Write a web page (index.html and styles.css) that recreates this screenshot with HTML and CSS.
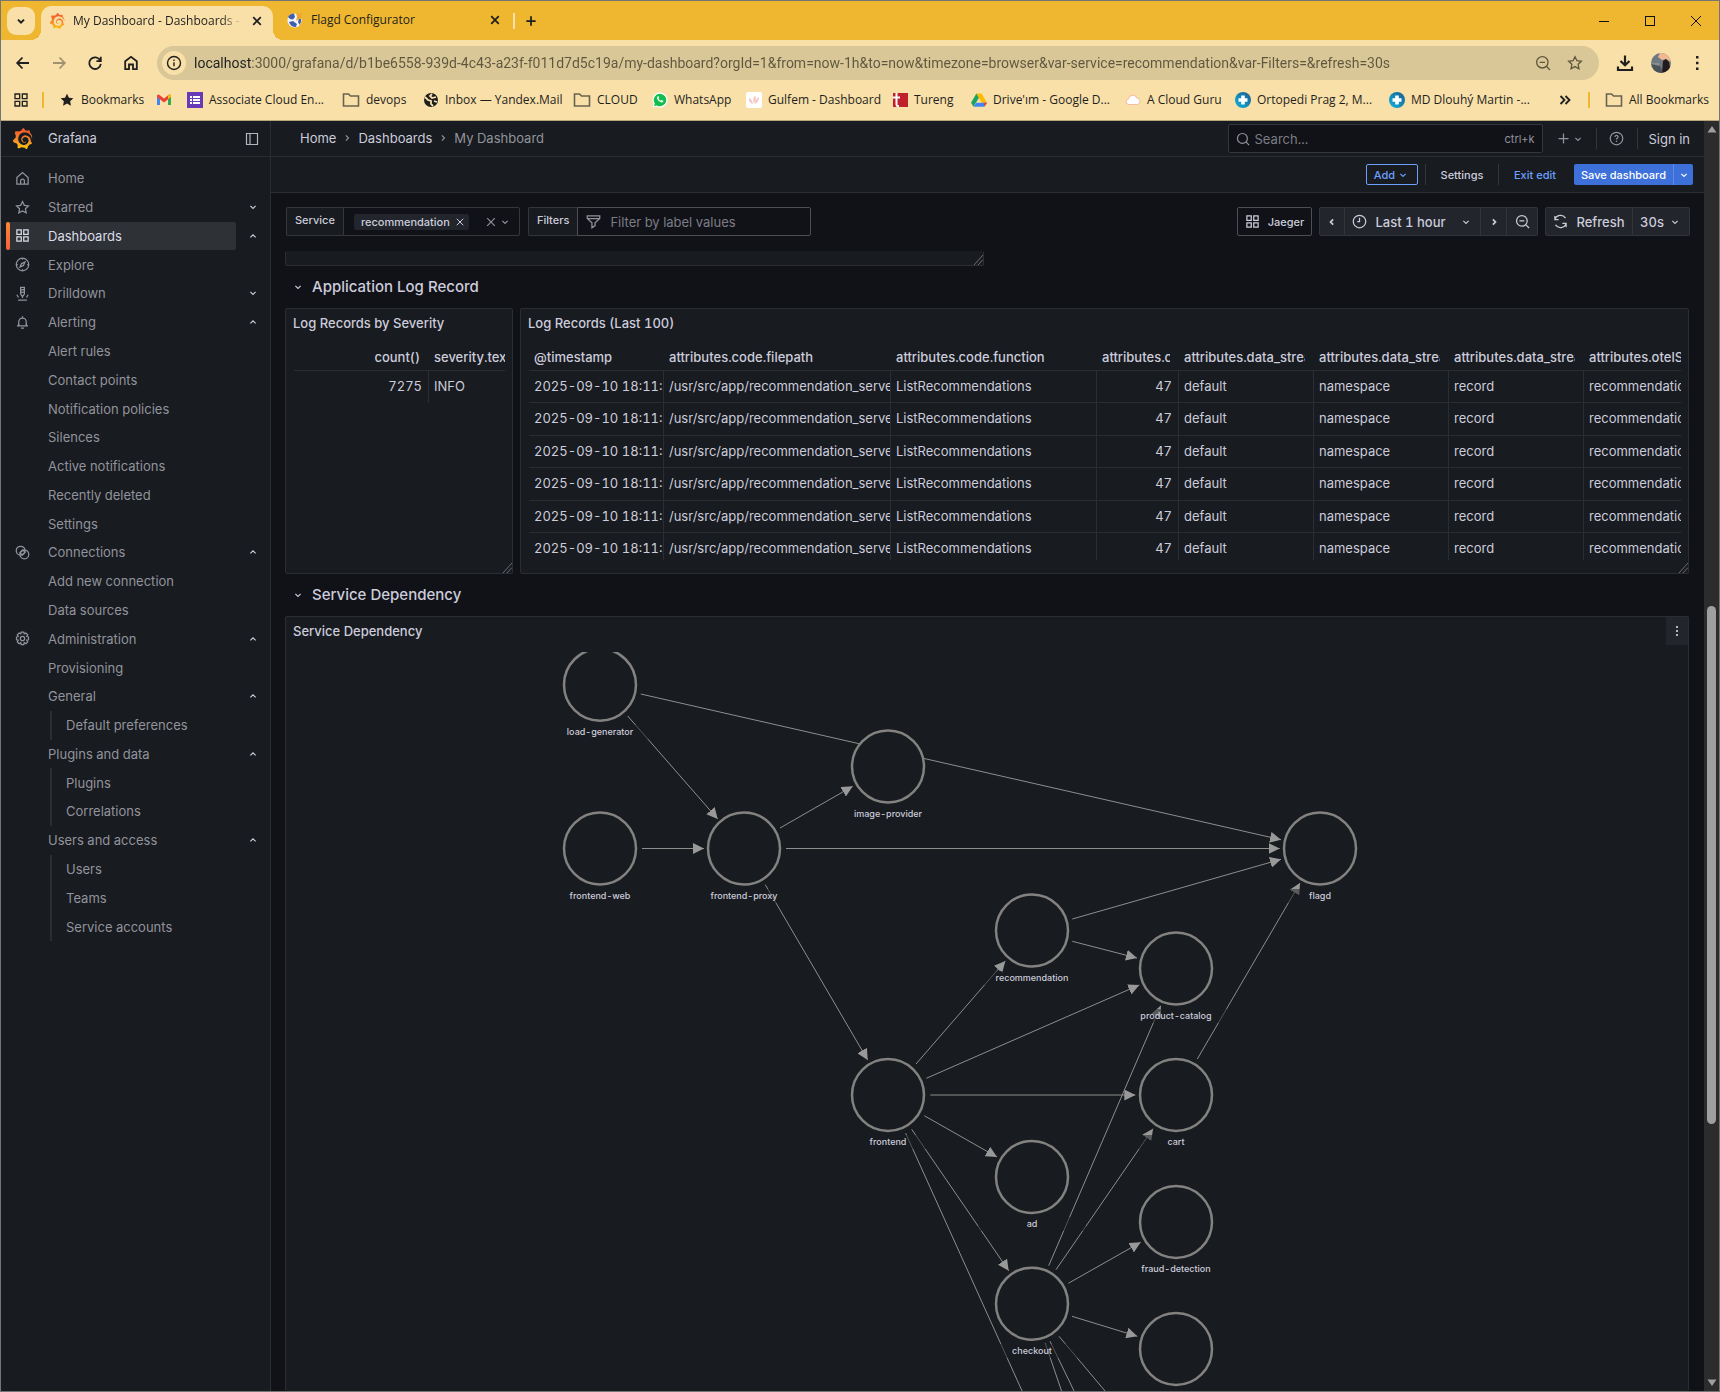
FILE: index.html
```html
<!DOCTYPE html>
<html lang="en">
<head>
<meta charset="utf-8">
<meta name="viewport" content="width=device-width, initial-scale=1">
<title>My Dashboard - Dashboards - Grafana</title>
<link rel="stylesheet" href="styles.css">
</head>
<body>
<svg class="sprite" aria-hidden="true">
  <defs>
    <linearGradient id="flame" x1="0" y1="1" x2="0" y2="0"><stop offset="0" stop-color="#fcc813"/><stop offset=".4" stop-color="#f7902a"/><stop offset="1" stop-color="#f0502a"/></linearGradient>
    <linearGradient id="teal" x1="1" y1="0" x2="0" y2="1"><stop offset="0" stop-color="#1c5a8c"/><stop offset="1" stop-color="#0fb5e0"/></linearGradient>
  </defs>
  <symbol id="grafana" viewBox="0 0 24 24"><path fill="url(#flame)" d="M23.02 10.59a8.578 8.578 0 0 0-.862-3.034 8.911 8.911 0 0 0-1.789-2.445c.337-1.342-.413-2.505-.413-2.505-1.292-.08-2.113.4-2.416.62-.052-.02-.102-.044-.154-.064-.22-.089-.446-.172-.677-.247-.231-.073-.47-.14-.711-.197a9.867 9.867 0 0 0-.875-.161C14.557.753 12.94 0 12.94 0c-1.804 1.145-2.147 2.744-2.147 2.744l-.018.093c-.098.029-.2.057-.298.088-.138.042-.275.094-.413.143-.138.055-.275.107-.41.166a8.869 8.869 0 0 0-1.557.87l-.063-.029c-2.497-.955-4.716.195-4.716.195-.203 2.658.996 4.33 1.235 4.636a11.608 11.608 0 0 0-.607 2.635C1.636 12.677.953 15.014.953 15.014c1.926 2.214 4.171 2.351 4.171 2.351.003-.002.006-.002.006-.005.285.509.615.994.986 1.446.156.19.32.371.488.548-.704 2.009.099 3.68.099 3.68 2.144.08 3.553-.937 3.849-1.173a9.784 9.784 0 0 0 3.164.501h.08l.055-.003.107-.002.103-.005.003.002c1.01 1.44 2.788 1.646 2.788 1.646 1.264-1.332 1.337-2.653 1.337-2.94v-.058c0-.02-.003-.039-.003-.06.265-.187.52-.387.758-.6a7.875 7.875 0 0 0 1.415-1.7c1.43.083 2.437-.885 2.437-.885-.236-1.49-1.085-2.216-1.264-2.354l-.018-.013-.016-.013a.217.217 0 0 1-.031-.02c.008-.092.016-.18.02-.27.011-.162.016-.323.016-.48v-.253l-.005-.098-.008-.135a1.891 1.891 0 0 0-.01-.13c-.003-.042-.008-.083-.013-.125l-.016-.124-.018-.122a6.215 6.215 0 0 0-2.032-3.73 6.015 6.015 0 0 0-3.222-1.46 6.292 6.292 0 0 0-.85-.048l-.107.002h-.063l-.044.003-.104.008a4.777 4.777 0 0 0-3.335 1.695c-.332.4-.592.84-.768 1.297a4.594 4.594 0 0 0-.312 1.817l.003.091c.005.055.007.11.013.164a3.615 3.615 0 0 0 .698 1.82 3.53 3.53 0 0 0 1.827 1.282c.33.098.66.14.971.137.039 0 .078 0 .114-.002l.063-.003c.02 0 .041-.003.062-.003.034-.002.065-.007.099-.01.007 0 .018-.003.028-.003l.031-.005.06-.008a1.18 1.18 0 0 0 .112-.02c.036-.008.072-.013.109-.024a2.634 2.634 0 0 0 .914-.415c.028-.02.056-.041.085-.065a.248.248 0 0 0 .039-.35.244.244 0 0 0-.309-.06l-.078.042c-.09.044-.184.083-.283.116a2.476 2.476 0 0 1-.475.096c-.028.003-.054.006-.083.006l-.083.002c-.026 0-.054 0-.08-.002l-.102-.006h-.012l-.024.006c-.016-.003-.031-.003-.044-.006-.031-.002-.06-.007-.091-.01a2.59 2.59 0 0 1-.724-.213 2.557 2.557 0 0 1-.667-.438 2.52 2.52 0 0 1-.805-1.475 2.306 2.306 0 0 1-.029-.444l.006-.122v-.023l.002-.031c.003-.021.003-.04.005-.06a3.163 3.163 0 0 1 1.352-2.29 3.12 3.12 0 0 1 .937-.43 2.946 2.946 0 0 1 .776-.101h.06l.07.002.045.003h.026l.07.005a4.041 4.041 0 0 1 1.635.49 3.94 3.94 0 0 1 1.602 1.662 3.77 3.77 0 0 1 .397 1.414l.005.076.003.075c.002.026.002.05.002.075 0 .024.003.052 0 .07v.065l-.002.073-.008.174a6.195 6.195 0 0 1-.08.639 5.1 5.1 0 0 1-.267.927 5.31 5.31 0 0 1-.624 1.13 5.052 5.052 0 0 1-3.237 2.014 4.82 4.82 0 0 1-.649.066l-.039.003h-.287a6.607 6.607 0 0 1-1.716-.265 6.776 6.776 0 0 1-3.4-2.274 6.75 6.75 0 0 1-.746-1.15 6.616 6.616 0 0 1-.714-2.596l-.005-.083-.002-.02v-.056l-.003-.073v-.096l-.003-.104v-.07l.003-.163c.008-.22.026-.45.054-.678a8.707 8.707 0 0 1 .28-1.355c.128-.444.286-.872.473-1.277a7.04 7.04 0 0 1 1.456-2.1 5.925 5.925 0 0 1 .953-.763c.169-.111.343-.213.524-.306.089-.05.182-.091.273-.135.047-.02.093-.042.138-.062a7.177 7.177 0 0 1 .714-.267l.145-.045c.049-.015.098-.026.148-.041.098-.029.197-.052.296-.076.049-.013.1-.02.15-.033l.15-.032.151-.028.076-.013.075-.01.153-.024c.057-.01.114-.013.171-.023l.169-.021c.036-.003.073-.008.106-.01l.073-.008.036-.003.042-.002c.057-.003.114-.008.171-.01l.086-.006h.023l.037-.003.145-.007a7.999 7.999 0 0 1 1.708.125 7.917 7.917 0 0 1 2.048.68 8.253 8.253 0 0 1 1.672 1.09l.09.077.089.078c.06.052.114.107.171.159.057.052.112.106.166.16.052.055.107.107.159.164a8.671 8.671 0 0 1 1.41 1.978c.012.026.028.052.04.078l.04.078.075.156c.023.051.05.1.07.153l.065.15a8.848 8.848 0 0 1 .45 1.34.19.19 0 0 0 .201.142.186.186 0 0 0 .172-.184c.01-.246.002-.532-.024-.856z"/></symbol>
  <symbol id="down" viewBox="0 0 24 24"><path d="M7.5 10l4.5 4.5 4.5-4.5"/></symbol>
  <symbol id="up" viewBox="0 0 24 24"><path d="M7.5 14.5L12 10l4.5 4.5"/></symbol>
  <symbol id="left" viewBox="0 0 24 24"><path d="M14 7.5L9.500 12l4.500 4.500"/></symbol>
  <symbol id="right" viewBox="0 0 24 24"><path d="M10 7.500l4.500 4.500-4.500 4.500"/></symbol>
  <symbol id="cross" viewBox="0 0 24 24"><path d="M5.500 5.500l13 13M18.500 5.500l-13 13"/></symbol>
  <symbol id="plus" viewBox="0 0 24 24"><path d="M12 4v16M4 12h16"/></symbol>
  <symbol id="home" viewBox="0 0 24 24"><path d="M3 10.500 12 2.500l9 8V21H3zM9 21v-5a3 3 0 0 1 6 0v5"/></symbol>
  <symbol id="star" viewBox="0 0 24 24"><path d="M12 2.500l2.900 6 6.600.9-4.800 4.600 1.200 6.600L12 17.400l-5.900 3.200L7.300 14 2.500 9.400l6.600-.9z"/></symbol>
  <symbol id="grid" viewBox="0 0 24 24"><path d="M3 3h7v7H3zM14 3h7v7h-7zM3 14h7v7H3zM14 14h7v7h-7z"/></symbol>
  <symbol id="compass" viewBox="0 0 24 24"><circle cx="12" cy="12" r="10"/><path d="M16 8l-2.500 5.500L8 16l2.500-5.500zM12 2v2.500M12 19.500V22M2 12h2.500M19.500 12H22"/></symbol>
  <symbol id="drill" viewBox="0 0 24 24"><path d="M9 2h6v11l-3 4-3-4zM9 6.500l6-1M9 10.500l6-1M12 17v2M5 22.500h14M5.500 18.500L3 14M18.500 18.500L21 14"/></symbol>
  <symbol id="bell" viewBox="0 0 24 24"><path d="M12 2v2.500M6 17v-6a6 6 0 0 1 12 0v6M3.500 17.500h17M9.500 21h5"/><path d="M4 17.500q2-.5 2-3M20 17.500q-2-.5-2-3"/></symbol>
  <symbol id="link" viewBox="0 0 24 24"><circle cx="9" cy="9" r="7"/><circle cx="15" cy="15" r="7"/><path d="M8 12.500l4.500-4.500 3.500 3.500-4.500 4.500z"/></symbol>
  <symbol id="gear" viewBox="0 0 24 24"><circle cx="12" cy="12" r="3.500"/><path d="M10 1.800h4l.8 2.800 2.600-1.400 2.900 2.900-1.500 2.500 2.800.8v4.600l-2.800.8 1.500 2.600-2.900 2.800-2.600-1.400-.8 2.800h-4l-.8-2.800-2.600 1.400-2.900-2.800 1.500-2.600-2.800-.8V9.400l2.800-.8-1.500-2.500 2.900-2.900 2.600 1.400z"/></symbol>
  <symbol id="search" viewBox="0 0 24 24"><circle cx="11" cy="11" r="8.500"/><path d="M17 17l5.500 5.500"/></symbol>
  <symbol id="zoomout" viewBox="0 0 24 24"><circle cx="11" cy="11" r="8.500"/><path d="M17 17l5.500 5.500M7 11h8"/></symbol>
  <symbol id="clock" viewBox="0 0 24 24"><circle cx="12" cy="12" r="10"/><path d="M12 6v6H8.500"/></symbol>
  <symbol id="sync" viewBox="0 0 24 24"><path d="M3 9a9.500 9.500 0 0 1 17-2.500M21 15a9.500 9.500 0 0 1-17 2.500M3 3v6h6M21 21v-6h-6"/></symbol>
  <symbol id="funnel" viewBox="0 0 24 24"><path d="M2 3h20v4l-7.500 7v4.500L9.500 22v-8L2 7zM2 7.500h20"/></symbol>
  <symbol id="folder" viewBox="0 0 18 16"><path d="M1.500 2h5l2 2h8v10h-15z"/></symbol>
  <symbol id="cross-disc" viewBox="0 0 16 16"><circle cx="8" cy="8" r="8" fill="url(#teal)"/><path d="M6.200 3.500h3.600v2.700h2.700v3.600H9.800v2.700H6.200V9.800H3.500V6.200h2.700z" fill="#fff"/></symbol>
</svg>

<header class="browser">
  <div class="tabstrip">
    <button class="tab-search" aria-label="Search tabs"><svg class="ico s16 bold"><use href="#down"/></svg></button>
    <div class="tab tab-active">
      <svg class="s16"><use href="#grafana"/></svg>
      <span class="tab-title fade">My Dashboard - Dashboards - Grafana</span>
      <button class="plain" aria-label="Close tab"><svg class="ico s14 bold"><use href="#cross"/></svg></button>
    </div>
    <div class="tab">
      <svg class="s16" viewBox="0 0 16 16"><circle cx="7.500" cy="8.500" r="7" fill="#f4f7fc"/><path d="M1 5a7 7 0 0 1 6-3.500L8 5 6 7.500 3 7zM2 10l4-1 4 3-1 3a7 7 0 0 1-7-5zM12 6l2 1a7 7 0 0 1-1.500 6L11 10z" fill="#3f5fae"/><path d="M9 1l3 1 3-1-1 3 1 2-3 1-3 2 1-4z" fill="#f0a330"/></svg>
      <span class="tab-title">Flagd Configurator</span>
      <button class="plain" aria-label="Close tab"><svg class="ico s14 bold"><use href="#cross"/></svg></button>
    </div>
    <span class="tab-rule"></span>
    <button class="plain new-tab" aria-label="New tab"><svg class="ico s14 bold"><use href="#plus"/></svg></button>
    <div class="window-controls">
      <button class="plain" aria-label="Minimize"><svg class="s12" viewBox="0 0 12 12"><path d="M1 6.500h10" stroke="#111"/></svg></button>
      <button class="plain" aria-label="Maximize"><svg class="s12" viewBox="0 0 12 12"><rect x="1.500" y="1.500" width="9" height="9" fill="none" stroke="#111"/></svg></button>
      <button class="plain" aria-label="Close"><svg class="s12" viewBox="0 0 12 12"><path d="M1 1l10 10M11 1L1 11" stroke="#111"/></svg></button>
    </div>
  </div>

  <div class="navbar">
    <div class="nav-buttons">
      <button class="plain" aria-label="Back"><svg class="s16" viewBox="0 0 16 16"><path d="M14 8H2.500M7.500 2.500L2.200 8l5.300 5.500" class="ink"/></svg></button>
      <button class="plain dim" aria-label="Forward"><svg class="s16" viewBox="0 0 16 16"><path d="M2 8h11.500M8.500 2.500L13.800 8l-5.300 5.500" class="ink"/></svg></button>
      <button class="plain" aria-label="Reload"><svg class="s16" viewBox="0 0 16 16"><path d="M13.200 5.500A5.800 5.800 0 1 0 13.800 8.800M13.800 1.800v4.400H9.400" class="ink"/></svg></button>
      <button class="plain" aria-label="Home page"><svg class="s16" viewBox="0 0 16 16"><path d="M2.200 14.200V6.200L8 1.800l5.800 4.400v8H10V9.500H6v4.700z" class="ink"/></svg></button>
    </div>
    <div class="omnibox">
      <button class="site-info" aria-label="View site information"><svg class="s16" viewBox="0 0 16 16"><circle cx="8" cy="8" r="6.500" class="ink thin"/><path d="M8 7.200v4M8 4.500v1.400" class="ink thin"/></svg></button>
      <input class="url" aria-label="Address" value="localhost:3000/grafana/d/b1be6558-939d-4c43-a23f-f011d7d5c19a/my-dashboard?orgId=1&amp;from=now-1h&amp;to=now&amp;timezone=browser&amp;var-service=recommendation&amp;var-Filters=&amp;refresh=30s">
      <button class="plain muted-ink" aria-label="Zoom"><svg class="ico s16"><use href="#zoomout"/></svg></button>
      <button class="plain muted-ink" aria-label="Bookmark this tab"><svg class="ico s16"><use href="#star"/></svg></button>
    </div>
    <div class="nav-tail">
      <button class="plain" aria-label="Downloads"><svg class="s18" viewBox="0 0 18 18"><path d="M9 1.500v9.500M4.500 7L9 11.200 13.500 7M2 12.500V16h14v-3.500" class="ink heavy"/></svg></button>
      <button class="plain" aria-label="Profile"><svg class="s20" viewBox="0 0 20 20"><clipPath id="disc"><circle cx="10" cy="10" r="10"/></clipPath><g clip-path="url(#disc)"><path d="M0 0h20v20H0z" fill="#6f7a80"/><path d="M9 0h11v9l-5-3-4 1-4-3z" fill="#f2b691"/><path d="M0 10h8l2 10H0z" fill="#8b8d92"/><path d="M11 20l1-12 3-2 3 3 2 11z" fill="#221a1c"/><path d="M0 11l9 2 3 7H4z" fill="#4b5258"/></g></svg></button>
      <button class="plain" aria-label="Chrome menu"><svg class="s16" viewBox="0 0 16 16"><path d="M7 1h2.500v2.500H7zM7 6.700h2.500v2.500H7zM7 12.400h2.500v2.500H7z" fill="#1f1f1f"/></svg></button>
    </div>
  </div>

  <nav class="bookmarks" aria-label="Bookmarks">
    <a href="#" aria-label="Apps"><svg class="ico s16"><use href="#grid"/></svg></a>
    <span class="bm-rule"></span>
    <a href="#"><svg class="s16 solid"><use href="#star"/></svg>Bookmarks</a>
    <a href="#" aria-label="Gmail"><svg class="s16" viewBox="0 0 16 16"><path d="M1 3.500V13h3V7z" fill="#4285f4"/><path d="M15 3.500V13h-3V7z" fill="#34a853"/><path d="M1 5l7 5.500L15 5V3.500Q14 2 12.500 3L8 6.500 3.500 3Q2 2 1 3.500z" fill="#ea4335"/><path d="M12 3.400V7.200L15 5V3.500Q14 2 12 3.400z" fill="#fbbc04"/></svg></a>
    <a href="#"><svg class="s16" viewBox="0 0 16 16"><path d="M0 0h16v16H0z" fill="#673ab7"/><path d="M3 4h2v2H3zM6 4h7v2H6zM3 7h2v2H3zM6 7h7v2H6zM3 10h2v2H3zM6 10h7v2H6z" fill="#fff"/></svg>Associate Cloud En...</a>
    <a href="#"><svg class="folder"><use href="#folder"/></svg>devops</a>
    <a href="#"><svg class="s16" viewBox="0 0 16 16"><circle cx="8" cy="8" r="7" fill="#1f1f1f"/><path d="M2 5l3 3 3 1v3l2 2M9 2L7 4l2 2 4-1M11 9l3 1" stroke="#f8e0a8" stroke-width="1.800" fill="none"/></svg>Inbox — Yandex.Mail</a>
    <a href="#"><svg class="folder"><use href="#folder"/></svg>CLOUD</a>
    <a href="#"><svg class="s16" viewBox="0 0 16 16"><path d="M8 .5a7.500 7.500 0 1 1-3.600 14L.5 15.500l1-3.900A7.500 7.500 0 0 1 8 .5z" fill="#fff"/><path d="M8 1.700a6.300 6.300 0 1 1-3.300 11.700L2 14.100l.8-2.700A6.300 6.300 0 0 1 8 1.700z" fill="#12bf4c"/><path d="M5.500 4.500q-1.500 1.500 1 4.200 2.800 2.600 4.600 1.300l.2-1.300-1.800-.8-.8.9q-1.400-.6-2.100-2l.7-.8-.7-1.700z" fill="#fff"/></svg>WhatsApp</a>
    <a href="#"><svg class="s16" viewBox="0 0 16 16"><rect width="16" height="16" rx="2" fill="#fff"/><path d="M7 12Q2 10 3 6q3 1 4 6zM8 12Q6 6 9 3.500q2 3-1 8.500zM9 12q0-5 4-7 0 5-4 7z" fill="#f5c6c4"/></svg>Gulfem - Dashboard</a>
    <a href="#"><svg class="s16" viewBox="0 0 16 16"><path d="M1 1h15v14H1z" fill="#c0202c"/><path d="M4.500 1v11.500q0 2 2.500 1.500M1 5.500h7" stroke="#fff" stroke-width="2" fill="none"/></svg>Tureng</a>
    <a href="#"><svg class="s16" viewBox="0 0 16 16"><path d="M5.400 1.500L0 10.700l2.600 4 5.500-9.200z" fill="#1ea362"/><path d="M5.400 1.500h5.200L16 10.700h-5.300z" fill="#ffba00"/><path d="M5.300 10.700H16l-2.700 4H2.600z" fill="#4285f4"/><path d="M12.500 10.700H16l-2.300 3.700z" fill="#ea4335"/></svg>Drive'ım - Google D...</a>
    <a href="#"><svg class="s16" viewBox="0 0 16 16"><path d="M3.500 12.500a2.800 2.800 0 0 1 0-5.500A4.300 4.300 0 0 1 11.800 6a3.300 3.300 0 0 1 .7 6.500z" fill="#fff" stroke="#f7b9a0"/></svg>A Cloud Guru</a>
    <a href="#"><svg class="s16"><use href="#cross-disc"/></svg>Ortopedi Prag 2, M...</a>
    <a href="#"><svg class="s16"><use href="#cross-disc"/></svg>MD Dlouhý Martin -...</a>
    <a href="#" aria-label="More bookmarks"><svg class="s14" viewBox="0 0 14 14"><path d="M2.500 3l4 4-4 4M7.500 3l4 4-4 4" class="ink"/></svg></a>
    <span class="bm-rule"></span>
    <a href="#"><svg class="folder"><use href="#folder"/></svg>All Bookmarks</a>
  </nav>
</header>

<div class="app">
  <aside class="sidebar">
    <div class="brand">
      <svg class="logo"><use href="#grafana"/></svg>
      <span>Grafana</span>
      <button class="plain" aria-label="Undock menu"><svg class="s14" viewBox="0 0 14 14"><path d="M1.500 1.500h11v11h-11zM5 1.500v11" fill="none" stroke="#b4b5bd" stroke-width="1.200"/></svg></button>
    </div>
    <ul class="menu">
      <li><a href="#"><svg class="ico s15"><use href="#home"/></svg>Home</a></li>
      <li><a href="#"><svg class="ico s15"><use href="#star"/></svg>Starred</a><button class="plain" aria-label="Expand Starred"><svg class="ico s14"><use href="#down"/></svg></button></li>
      <li class="current"><a href="#"><svg class="ico s15"><use href="#grid"/></svg>Dashboards</a><button class="plain" aria-label="Collapse Dashboards"><svg class="ico s14"><use href="#up"/></svg></button></li>
      <li><a href="#"><svg class="ico s15"><use href="#compass"/></svg>Explore</a></li>
      <li><a href="#"><svg class="ico s15"><use href="#drill"/></svg>Drilldown</a><button class="plain" aria-label="Expand Drilldown"><svg class="ico s14"><use href="#down"/></svg></button></li>
      <li><a href="#"><svg class="ico s15"><use href="#bell"/></svg>Alerting</a><button class="plain" aria-label="Collapse Alerting"><svg class="ico s14"><use href="#up"/></svg></button></li>
      <li class="sub"><a href="#">Alert rules</a></li>
      <li class="sub"><a href="#">Contact points</a></li>
      <li class="sub"><a href="#">Notification policies</a></li>
      <li class="sub"><a href="#">Silences</a></li>
      <li class="sub"><a href="#">Active notifications</a></li>
      <li class="sub"><a href="#">Recently deleted</a></li>
      <li class="sub"><a href="#">Settings</a></li>
      <li><a href="#"><svg class="ico s15"><use href="#link"/></svg>Connections</a><button class="plain" aria-label="Collapse Connections"><svg class="ico s14"><use href="#up"/></svg></button></li>
      <li class="sub"><a href="#">Add new connection</a></li>
      <li class="sub"><a href="#">Data sources</a></li>
      <li><a href="#"><svg class="ico s15"><use href="#gear"/></svg>Administration</a><button class="plain" aria-label="Collapse Administration"><svg class="ico s14"><use href="#up"/></svg></button></li>
      <li class="sub"><a href="#">Provisioning</a></li>
      <li class="sub"><a href="#">General</a><button class="plain" aria-label="Collapse General"><svg class="ico s14"><use href="#up"/></svg></button></li>
      <li class="leaf"><a href="#">Default preferences</a></li>
      <li class="sub"><a href="#">Plugins and data</a><button class="plain" aria-label="Collapse Plugins and data"><svg class="ico s14"><use href="#up"/></svg></button></li>
      <li class="leaf"><a href="#">Plugins</a></li>
      <li class="leaf"><a href="#">Correlations</a></li>
      <li class="sub"><a href="#">Users and access</a><button class="plain" aria-label="Collapse Users and access"><svg class="ico s14"><use href="#up"/></svg></button></li>
      <li class="leaf"><a href="#">Users</a></li>
      <li class="leaf"><a href="#">Teams</a></li>
      <li class="leaf"><a href="#">Service accounts</a></li>
    </ul>
  </aside>

  <main class="main">
    <div class="topbar">
      <nav class="crumbs" aria-label="Breadcrumbs">
        <a href="#">Home</a><svg class="ico s14"><use href="#right"/></svg><a href="#">Dashboards</a><svg class="ico s14"><use href="#right"/></svg><span>My Dashboard</span>
      </nav>
      <label class="search"><svg class="ico s14"><use href="#search"/></svg><input type="search" placeholder="Search..." aria-label="Search"><kbd>ctrl+k</kbd></label>
      <button class="plain add-menu" aria-label="New"><svg class="ico s15"><use href="#plus"/></svg><svg class="ico s14"><use href="#down"/></svg></button>
      <span class="rule"></span>
      <button class="plain help" aria-label="Help"><svg class="ico s15" viewBox="0 0 24 24"><circle cx="12" cy="12" r="10"/><path d="M9.500 9.500a2.500 2.500 0 1 1 3.500 2.300q-1 .5-1 1.700M12 15.500v2"/></svg></button>
      <span class="rule"></span>
      <a class="signin" href="#">Sign in</a>
    </div>

    <div class="actions">
      <button class="btn-add">Add<svg class="ico s14"><use href="#down"/></svg></button>
      <span class="rule"></span>
      <button class="plain settings">Settings</button>
      <span class="rule"></span>
      <button class="plain exit">Exit edit</button>
      <div class="save">
        <button>Save dashboard</button><button aria-label="More save options"><svg class="ico s14"><use href="#down"/></svg></button>
      </div>
    </div>

    <div class="controls">
      <div class="field">
        <label class="field-label" for="service">Service</label>
        <div class="picker">
          <span class="chip">recommendation<button class="plain" aria-label="Remove recommendation"><svg class="ico s12"><use href="#cross"/></svg></button></span>
          <input id="service" role="combobox" aria-expanded="false">
          <button class="plain" aria-label="Clear"><svg class="ico s14"><use href="#cross"/></svg></button>
          <button class="plain" aria-label="Open list"><svg class="ico s14"><use href="#down"/></svg></button>
        </div>
      </div>
      <div class="field">
        <label class="field-label" for="filters">Filters</label>
        <div class="filter-box"><svg class="ico s15"><use href="#funnel"/></svg><input id="filters" placeholder="Filter by label values"></div>
      </div>
      <div class="time-tools">
        <button class="btn-link"><svg class="ico s15"><use href="#grid"/></svg>Jaeger</button>
        <div class="group">
          <button class="step" aria-label="Move time range backwards"><svg class="ico s14 bold"><use href="#left"/></svg></button>
          <button class="range"><svg class="ico s15"><use href="#clock"/></svg>Last 1 hour<svg class="ico s14"><use href="#down"/></svg></button>
          <button class="step" aria-label="Move time range forwards"><svg class="ico s14 bold"><use href="#right"/></svg></button>
          <button class="zoom" aria-label="Zoom out time range"><svg class="ico s15"><use href="#zoomout"/></svg></button>
        </div>
        <div class="group">
          <button class="refresh"><svg class="ico s15"><use href="#sync"/></svg>Refresh</button>
          <button class="interval">30s<svg class="ico s14"><use href="#down"/></svg></button>
        </div>
      </div>
    </div>

    <div class="board">
      <section class="panel panel-tail"><svg class="grip" viewBox="0 0 10 10"><path d="M1 10L10 0M5 10l5-5.500"/></svg></section>
      <h2 class="row-title"><svg class="ico s14"><use href="#down"/></svg>Application Log Record</h2>
      <div class="log-row">
        <section class="panel">
          <h3>Log Records by Severity</h3>
          <div class="table-view">
            <table class="severity">
              <colgroup><col class="w-m"><col class="w-s"></colgroup>
              <thead><tr><th class="num"><div>count()</div></th><th class="edge"><div>severity.text</div></th></tr></thead>
              <tbody><tr><td class="num">7275</td><td>INFO</td></tr></tbody>
            </table>
          </div>
          <svg class="grip" viewBox="0 0 10 10"><path d="M1 10L10 0M5 10l5-5.500"/></svg>
        </section>
        <section class="panel">
          <h3>Log Records (Last 100)</h3>
          <div class="table-view">
            <table class="records">
              <colgroup><col class="w-m"><col class="w-xl"><col class="w-l"><col class="w-s"><col class="w-m"><col class="w-m"><col class="w-m"><col class="w-m"></colgroup>
              <thead><tr><th><div>@timestamp</div></th><th><div>attributes.code.filepath</div></th><th><div>attributes.code.function</div></th><th><div>attributes.c</div></th><th><div>attributes.data_strea</div></th><th><div>attributes.data_strea</div></th><th><div>attributes.data_strea</div></th><th><div>attributes.otelS</div></th></tr></thead>
              <tbody>
                <tr><td>2025-09-10 18:11:2</td><td>/usr/src/app/recommendation_server</td><td>ListRecommendations</td><td class="num">47</td><td>default</td><td>namespace</td><td>record</td><td>recommendation</td></tr>
                <tr><td>2025-09-10 18:11:2</td><td>/usr/src/app/recommendation_server</td><td>ListRecommendations</td><td class="num">47</td><td>default</td><td>namespace</td><td>record</td><td>recommendation</td></tr>
                <tr><td>2025-09-10 18:11:2</td><td>/usr/src/app/recommendation_server</td><td>ListRecommendations</td><td class="num">47</td><td>default</td><td>namespace</td><td>record</td><td>recommendation</td></tr>
                <tr><td>2025-09-10 18:11:2</td><td>/usr/src/app/recommendation_server</td><td>ListRecommendations</td><td class="num">47</td><td>default</td><td>namespace</td><td>record</td><td>recommendation</td></tr>
                <tr><td>2025-09-10 18:11:2</td><td>/usr/src/app/recommendation_server</td><td>ListRecommendations</td><td class="num">47</td><td>default</td><td>namespace</td><td>record</td><td>recommendation</td></tr>
                <tr><td>2025-09-10 18:11:2</td><td>/usr/src/app/recommendation_server</td><td>ListRecommendations</td><td class="num">47</td><td>default</td><td>namespace</td><td>record</td><td>recommendation</td></tr>
              </tbody>
            </table>
          </div>
          <svg class="grip" viewBox="0 0 10 10"><path d="M1 10L10 0M5 10l5-5.500"/></svg>
        </section>
      </div>
      <h2 class="row-title"><svg class="ico s14"><use href="#down"/></svg>Service Dependency</h2>
      <section class="panel panel-graph">
        <div class="panel-head">
          <h3>Service Dependency</h3>
          <button class="panel-menu" aria-label="Panel menu"><svg class="s14" viewBox="0 0 14 14"><path d="M6 2h2v2H6zM6 6h2v2H6zM6 10h2v2H6z" fill="#b4b5bd"/></svg></button>
        </div>
        <svg class="graph" viewBox="286 652 1402 739" preserveAspectRatio="xMidYMin slice" role="img" aria-label="Service dependency graph">
          <defs>
            <marker id="arrow" viewBox="0 0 11 11" refX="11" refY="5.500" markerWidth="11" markerHeight="11" markerUnits="userSpaceOnUse" orient="auto"><path d="M0 0l11 5.500L0 11z" fill="#999"/></marker>
          </defs>
          <g class="edges">
            <path d="M640.700 694L1281 839.700"/>
            <path d="M627.700 716L717.700 819"/>
            <path d="M642 848.500H704"/>
            <path d="M780 828L852.700 786.300"/>
            <path d="M786 848.500H1279.700"/>
            <path d="M765.300 884.700L867.700 1060"/>
            <path d="M1072.300 919L1281 859.300"/>
            <path d="M1072.300 941.300L1137 958"/>
            <path d="M916 1064L1005.300 961"/>
            <path d="M926.300 1078.300L1139.300 985"/>
            <path d="M930.300 1095H1135.300"/>
            <path d="M924.300 1115.700L997 1157"/>
            <path d="M911.700 1129.300L1008.700 1270.700"/>
            <path d="M905.700 1133.300L1065 1486"/>
            <path d="M1048.700 1265.700L1160.700 1005.700"/>
            <path d="M1056 1269.700L1153 1128.700"/>
            <path d="M1068.300 1283.300L1140.700 1242.300"/>
            <path d="M1072 1316.300L1137.300 1336.300"/>
            <path d="M1045.300 1343.300L1094 1486"/>
            <path d="M1050 1341.300L1120 1486"/>
            <path d="M1059 1336.300L1185 1486"/>
            <path d="M1197.300 1059L1300 883"/>
          </g>
          <g class="nodes">
            <circle cx="600" cy="684.700" r="36"/><circle cx="888" cy="766.500" r="36"/><circle cx="600" cy="848.500" r="36"/><circle cx="744" cy="848.500" r="36"/><circle cx="1032" cy="930.500" r="36"/><circle cx="1320" cy="848.500" r="36"/><circle cx="1176" cy="968.500" r="36"/><circle cx="1176" cy="1095" r="36"/><circle cx="888" cy="1095" r="36"/><circle cx="1032" cy="1177" r="36"/><circle cx="1032" cy="1303.700" r="36"/><circle cx="1176" cy="1222" r="36"/><circle cx="1176" cy="1349" r="36"/>
          </g>
          <g class="plates">
            <rect x="546" y="725" width="108" height="14"/><rect x="834" y="807" width="108" height="14"/><rect x="546" y="889" width="108" height="14"/><rect x="690" y="889" width="108" height="14"/><rect x="978" y="971" width="108" height="14"/><rect x="1266" y="889" width="108" height="14"/><rect x="1122" y="1009" width="108" height="14"/><rect x="1122" y="1135" width="108" height="14"/><rect x="834" y="1135" width="108" height="14"/><rect x="978" y="1217" width="108" height="14"/><rect x="978" y="1344" width="108" height="14"/><rect x="1122" y="1262" width="108" height="14"/>
          </g>
          <g class="labels">
            <text x="600" y="735">load-generator</text><text x="888" y="817">image-provider</text><text x="600" y="899">frontend-web</text><text x="744" y="899">frontend-proxy</text><text x="1032" y="981">recommendation</text><text x="1320" y="899">flagd</text><text x="1176" y="1019">product-catalog</text><text x="1176" y="1145">cart</text><text x="888" y="1145">frontend</text><text x="1032" y="1227">ad</text><text x="1032" y="1354">checkout</text><text x="1176" y="1272">fraud-detection</text>
          </g>
        </svg>
      </section>
    </div>
  </main>

  <div class="scrollbar" aria-hidden="true">
    <svg viewBox="0 0 14 16"><path d="M7 5l4.500 6.500h-9z"/></svg>
    <span class="before"></span><span class="thumb"></span><span class="after"></span>
    <svg viewBox="0 0 14 16"><path d="M7 11L2.500 4.500h9z"/></svg>
  </div>
</div>
</body>
</html>
```

FILE: styles.css
```css
* { box-sizing: border-box; }

body {
  margin: 0;
  height: 100vh;
  display: flex;
  flex-direction: column;
  overflow: hidden;
  border: 1px solid #757575;
  background: #111217;
  color: #ccccdc;
  font-family: Inter, "Liberation Sans", sans-serif;
  font-size: 13px;
  line-height: 20px;
  font-variant-numeric: tabular-nums;
}

button, input { font: inherit; color: inherit; font-variant-numeric: inherit; }
button { display: inline-flex; align-items: center; justify-content: center; margin: 0; padding: 0; border: 0; cursor: pointer; }
input { min-width: 0; padding: 0; border: 0; outline: 0; background: none; }
a { color: inherit; text-decoration: none; }
h2, h3 { margin: 0; font-weight: 500; }
svg { flex: none; display: block; }

.sprite { position: absolute; width: 0; height: 0; }
.plain { background: none; }
.ico { fill: none; stroke: currentColor; stroke-width: 2; }
.ico.bold { stroke-width: 3; }
.s12 { width: 12px; height: 12px; }
.s14 { width: 14px; height: 14px; }
.s15 { width: 15px; height: 15px; }
.s16 { width: 16px; height: 16px; }
.s18 { width: 18px; height: 18px; }
.s20 { width: 20px; height: 20px; }

/* Browser frame */
.browser {
  flex: none;
  border-bottom: 1px solid #b8a67c;
  background: #f8e0a8;
  color: #1f1f1f;
  font-family: "Open Sans", "Noto Sans", sans-serif;
  font-size: 12px;
}
.tabstrip { display: flex; align-items: center; height: 39px; padding-left: 6px; background: #efb730; }
.tab-search { width: 28px; height: 28px; margin-right: 6px; border-radius: 9px; background: #f8e0a8; }
.tab { display: flex; align-items: center; gap: 8px; width: 232px; height: 34px; padding: 0 9px 1px 8px; }
.tab + .tab { width: 238px; padding-left: 14px; padding-right: 9px; }
.tab-active { position: relative; align-self: flex-end; padding-bottom: 5px; border-radius: 10px 10px 0 0; background: #f8e0a8; }
.tab-active::before, .tab-active::after { content: ""; position: absolute; bottom: 0; width: 10px; height: 10px; }
.tab-active::before { right: 100%; background: radial-gradient(circle at 0 0, transparent 10px, #f8e0a8 10px); }
.tab-active::after { left: 100%; background: radial-gradient(circle at 100% 0, transparent 10px, #f8e0a8 10px); }
.tab-title { flex: 1; overflow: hidden; white-space: nowrap; }
.fade { mask-image: linear-gradient(90deg, #000 88%, transparent); }
.tab-rule { width: 2px; height: 16px; margin-left: 2px; background: #f8e0a8; }
.new-tab { margin-left: 9px; }
.window-controls { display: flex; margin-left: auto; }
.window-controls button { width: 46px; height: 38px; }

.navbar { display: flex; align-items: center; height: 46px; }
.nav-buttons { display: flex; padding-left: 4px; }
.nav-buttons button { width: 36px; height: 34px; }
.ink { fill: none; stroke: #1f1f1f; stroke-width: 1.8; }
.ink.thin { stroke-width: 1.4; }
.ink.heavy { stroke-width: 2.2; }
.dim { opacity: .4; }
.omnibox { flex: 1; display: flex; align-items: center; height: 34px; margin-left: 8px; padding: 0 16px 0 5px; border-radius: 17px; background: #d9c797; }
.site-info { width: 24px; height: 24px; border-radius: 12px; background: #f8e0a8; }
.url {
  flex: 1;
  margin-left: 8px;
  font-family: Roboto, "Open Sans", sans-serif;
  font-size: 14px;
  color: transparent;
  background: linear-gradient(90deg, #1f1f1f 58px, #5e563f 58px);
  background-clip: text;
}
.muted-ink { color: #5e563f; }
.muted-ink + .muted-ink { margin-left: 16px; }
.nav-tail { display: flex; padding-left: 8px; padding-right: 4px; }
.nav-tail button { width: 36px; height: 34px; }

.bookmarks {
  display: grid;
  grid-template-columns: 29px 17px 97px 31px 155px 81px 150px 79px 94px 146px 79px 154px 110px 154px 1fr 30px 17px 114px;
  align-items: center;
  height: 34px;
  padding-left: 12px;
  padding-bottom: 6px;
}
.bookmarks a { display: flex; align-items: center; gap: 6px; white-space: nowrap; }
.bm-rule { width: 2px; height: 16px; background: #efb730; }
.folder { width: 18px; height: 16px; fill: none; stroke: #6a6350; stroke-width: 1.6; }
.solid { fill: #1f1f1f; }

/* Grafana */
.app { flex: 1; min-height: 0; display: flex; }

.sidebar { flex: none; width: 270px; border-right: 1px solid #2b2d32; background: #181b1f; }
.brand { display: flex; align-items: center; height: 36px; padding: 0 11px; border-bottom: 1px solid #2b2d32; }
.brand span { flex: 1; margin-left: 15px; padding-bottom: 2px; }
.logo { width: 21px; height: 21px; }
.menu {
  display: grid;
  grid-auto-rows: 1fr;
  height: 777px;
  margin: 7px 0 0;
  padding: 0;
  list-style: none;
  color: #92939d;
}
.menu li { display: flex; align-items: stretch; margin-left: 5px; padding-right: 10px; }
.menu a { flex: 1; display: flex; align-items: center; gap: 18px; margin-right: 10px; padding-left: 9px; border-radius: 2px; }
.menu button { color: #ccccdc; }
.menu .sub a { padding-left: 42px; }
.menu .leaf a { margin-left: 44px; padding-left: 14px; border-left: 2px solid #2b2d32; border-radius: 0; }
.menu .current a { position: relative; color: #dcdce8; background: #2e3136; }
.menu .current a::before { content: ""; position: absolute; left: 0; top: 0; bottom: 0; width: 4px; border-radius: 2px; background: linear-gradient(#ff8833, #f55f3e); }

.main { flex: 1; min-width: 0; display: flex; flex-direction: column; }
.rule { width: 1px; height: 21px; background: #34363c; }

.topbar { display: flex; align-items: center; height: 36px; padding-left: 29px; padding-right: 14px; border-bottom: 1px solid #2b2d32; background: #181b1f; }
.crumbs { flex: 1; display: flex; align-items: center; gap: 4px; padding-bottom: 2px; }
.crumbs span, .crumbs svg { color: #92939d; }
.search { display: flex; align-items: center; width: 315px; height: 29px; padding: 0 7px; border: 1px solid #34363c; border-radius: 2px; background: #111217; color: #92939d; }
.search input { flex: 1; margin-left: 5px; }
input::placeholder { color: #7b7c86; opacity: 1; }
kbd { font: inherit; font-size: 11px; }
.add-menu { margin-left: 13px; margin-right: 11px; color: #92939d; }
.help { width: 40px; color: #92939d; }
.signin { margin-left: 11px; }

.actions { display: flex; align-items: center; justify-content: flex-end; height: 36px; padding-right: 11px; border-bottom: 1px solid #2b2d32; background: #181b1f; font-size: 11px; font-weight: 500; }
.btn-add { width: 52px; height: 21px; margin-right: 7px; gap: 1px; border: 1px solid #6e9fff; border-radius: 2px; background: none; color: #6e9fff; }
.settings { width: 72px; }
.exit { width: 72px; color: #6e9fff; }
.save { display: flex; margin-left: 3px; }
.save button { height: 21px; background: #3d71d9; color: #fff; }
.save button:first-child { width: 99px; border-radius: 2px 0 0 2px; }
.save button:last-child { width: 20px; border-left: 1px solid #5c8ae6; border-radius: 0 2px 2px 0; }

.controls { display: flex; gap: 8px; height: 58px; padding: 14px 14px 0 15px; font-weight: 500; }
.field { display: flex; height: 29px; }
.field-label { padding: 0 8px; border: 1px solid #34363c; border-right: 0; border-radius: 2px 0 0 2px; background: #181b1f; font-size: 11px; line-height: 25px; }
.picker { display: flex; align-items: center; width: 177px; padding: 0 7px 0 10px; border: 1px solid #34363c; border-radius: 0 2px 2px 0; color: #92939d; }
.picker input { flex: 1; }
.chip { display: flex; align-items: center; gap: 4px; height: 16px; padding: 0 3px 0 7px; border-radius: 2px; background: #22252b; color: #ccccdc; font-size: 11px; }
.filter-box { display: flex; align-items: center; gap: 9px; width: 234px; padding-left: 8px; border: 1px solid #4c4e54; border-radius: 0 2px 2px 0; color: #92939d; font-weight: 400; }
.filter-box input { flex: 1; }
.time-tools { display: flex; gap: 7px; margin-left: auto; }
.time-tools button { height: 29px; }
.btn-link { gap: 8px; width: 75px; border: 1px solid #4c4e54; border-radius: 2px; background: none; font-size: 11px; }
.group { display: flex; }
.group button { border: 1px solid #32343a; background: #22252b; }
.group button + button { border-left: 0; }
.group button:first-child { border-radius: 2px 0 0 2px; }
.group button:last-child { border-radius: 0 2px 2px 0; }
.step { width: 26px; }
.range { width: 136px; gap: 8px; }
.range svg:last-child { margin-left: 5px; }
.zoom { width: 31px; }
.refresh { width: 88px; gap: 8px; }
.interval { width: 57px; gap: 4px; }

.board { flex: 1; min-height: 0; display: flex; flex-direction: column; padding: 0 15px 0 14px; }
.panel { position: relative; min-width: 0; border: 1px solid #2b2d32; border-radius: 2px; background: #181b1f; }
.panel h3 { padding-left: 7px; font-size: 13px; line-height: 28px; }
.panel-tail { flex: none; width: calc(50% - 3px); height: 15px; border-top: 0; }
.grip { position: absolute; right: 0; bottom: 0; width: 10px; height: 10px; fill: none; stroke: #6b6c74; }
.row-title { flex: none; display: flex; align-items: center; gap: 7px; height: 42px; padding-left: 6px; font-size: 15px; }
.log-row { flex: none; display: grid; grid-template-columns: 228px 1fr; gap: 7px; height: 266px; }
.table-view { height: 222px; margin: 1px 7px 0 8px; overflow: hidden; }
table { table-layout: fixed; border-spacing: 0; }
.severity { width: 217px; }
.records { width: 1190px; }
.w-s { width: 82px; }
.w-m { width: 135px; }
.w-l { width: 206px; }
.w-xl { width: 227px; }
th, td { height: 32px; padding: 0 6px 2px 5px; overflow: hidden; border-bottom: 1px solid #2b2d32; font-weight: 400; text-align: left; white-space: nowrap; }
th { height: 33px; padding-top: 7px; padding-right: 9px; font-weight: 500; }
th div { overflow: hidden; }
th.edge { padding-right: 0; }
td { border-right: 1px solid #2b2d32; }
td:last-child { border-right: 0; }
tr:nth-child(even) td { height: 33px; }
tbody tr:last-child td { height: 32px; border-bottom: 0; }
.num { text-align: right; }

.panel-graph { flex: 1; min-height: 0; display: flex; flex-direction: column; border-bottom: 0; }
.panel-head { display: flex; justify-content: space-between; height: 35px; }
.panel-menu { width: 22px; height: 28px; background: #22252b; }
.graph { flex: 1; width: 100%; min-height: 0; overflow: hidden; }
.edges path { fill: none; stroke: #8e8e8e; stroke-width: 1; marker-end: url(#arrow); }
.nodes circle { fill: #181b1f; stroke: #848280; stroke-width: 2.5; }
.plates rect { fill: #181b1f; fill-opacity: .5; }
.labels text { fill: #ccccdc; font-size: 9px; font-weight: 500; text-anchor: middle; }

.scrollbar { flex: none; display: flex; flex-direction: column; align-items: center; width: 15px; background: #2c2c2c; }
.scrollbar svg { width: 14px; height: 16px; fill: #9f9f9f; }
.before { flex: 469; }
.thumb { flex: 519; width: 9px; border-radius: 5px; background: #9f9f9f; }
.after { flex: 251; }
```
